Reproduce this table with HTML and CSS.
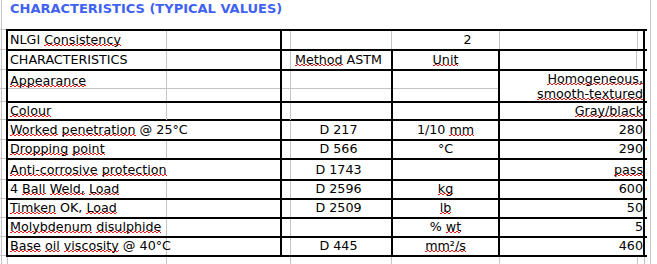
FILE: index.html
```html
<!DOCTYPE html>
<html>
<head>
<meta charset="utf-8">
<link rel="stylesheet" href="styles.css">
</head>
<body>
<div class="sheet">
  <h1 class="title">CHARACTERISTICS (TYPICAL VALUES)</h1>
  <div class="table">
    <div class="row r1">
      <div class="cell c1 g1">NLGI&nbsp;<span class="sp">Consistency</span></div>
      <div class="cell merged">2</div>
    </div>
    <div class="row r2">
      <div class="cell c1 g1">CHARACTERISTICS</div>
      <div class="cell c2 g2"><span class="sp">Method</span>&nbsp;ASTM</div>
      <div class="cell c3"><span class="sp">Unit</span></div>
      <div class="cell c4 g4"></div>
    </div>
    <div class="row r3">
      <div class="cell c1 g1 split"><span class="top"><span class="sp">Appearance</span></span></div>
      <div class="cell c2 g2 split"></div>
      <div class="cell c3 split"></div>
      <div class="cell c4 two"><span class="line"><span class="sp">Homogeneous,</span></span><span class="line"><span class="sp">smooth-textured</span></span></div>
    </div>
    <div class="row r4">
      <div class="cell c1 g1"><span class="sp">Colour</span></div>
      <div class="cell c2 g2"></div>
      <div class="cell c3"></div>
      <div class="cell c4"><span class="sp">Gray/black</span></div>
    </div>
    <div class="row r5">
      <div class="cell c1"><span class="sp">Worked</span>&nbsp;<span class="sp">penetration</span>&nbsp;@ 25°C</div>
      <div class="cell c2 g2">D 217</div>
      <div class="cell c3">1/10&nbsp;<span class="sp">mm</span></div>
      <div class="cell c4">280</div>
    </div>
    <div class="row r6">
      <div class="cell c1 g1"><span class="sp">Dropping</span>&nbsp;<span class="sp">point</span></div>
      <div class="cell c2 g2">D 566</div>
      <div class="cell c3">°C</div>
      <div class="cell c4">290</div>
    </div>
    <div class="row r7">
      <div class="cell c1"><span class="sp">Anti-corrosive</span>&nbsp;<span class="sp">protection</span></div>
      <div class="cell c2 g2">D 1743</div>
      <div class="cell c3"></div>
      <div class="cell c4"><span class="sp">pass</span></div>
    </div>
    <div class="row r8">
      <div class="cell c1 g1">4&nbsp;<span class="sp">Ball</span>&nbsp;<span class="sp">Weld,</span>&nbsp;<span class="sp">Load</span></div>
      <div class="cell c2 g2">D 2596</div>
      <div class="cell c3"><span class="sp">kg</span></div>
      <div class="cell c4">600</div>
    </div>
    <div class="row r9">
      <div class="cell c1 g1"><span class="sp">Timken</span>&nbsp;OK,&nbsp;<span class="sp">Load</span></div>
      <div class="cell c2 g2">D 2509</div>
      <div class="cell c3"><span class="sp">lb</span></div>
      <div class="cell c4">50</div>
    </div>
    <div class="row r10">
      <div class="cell c1 g1"><span class="sp">Molybdenum</span>&nbsp;<span class="sp">disulphide</span></div>
      <div class="cell c2 g2"></div>
      <div class="cell c3">%&nbsp;<span class="sp">wt</span></div>
      <div class="cell c4">5</div>
    </div>
    <div class="row r11">
      <div class="cell c1 g1"><span class="sp">Base</span>&nbsp;<span class="sp">oil</span>&nbsp;<span class="sp">viscosity</span>&nbsp;@ 40°C</div>
      <div class="cell c2 g2">D 445</div>
      <div class="cell c3"><span class="sp">mm²/s</span></div>
      <div class="cell c4">460</div>
    </div>
  </div>
  <div class="below"></div>
</div>
</body>
</html>
```

FILE: styles.css
```css
html, body {
  margin: 0;
  padding: 0;
  background: #fff;
}

.sheet {
  width: 657px;
  height: 264px;
  overflow: hidden;
  font-family: "DejaVu Sans", Verdana, sans-serif;
  font-size: 12.7px;
  color: #000;
  background:
    linear-gradient(#c4c4c4, #c4c4c4) 1px 0 / 1px 100% no-repeat,
    linear-gradient(#c4c4c4, #c4c4c4) 650px 0 / 1px 100% no-repeat,
    linear-gradient(#c4c4c4, #c4c4c4) 0 29px / 6px 1px no-repeat,
    linear-gradient(#c4c4c4, #c4c4c4) 0 49px / 6px 1px no-repeat,
    linear-gradient(#c4c4c4, #c4c4c4) 0 69px / 6px 1px no-repeat,
    linear-gradient(#c4c4c4, #c4c4c4) 0 88px / 6px 1px no-repeat,
    linear-gradient(#c4c4c4, #c4c4c4) 0 101px / 6px 1px no-repeat,
    linear-gradient(#c4c4c4, #c4c4c4) 0 119px / 6px 1px no-repeat,
    linear-gradient(#c4c4c4, #c4c4c4) 0 139px / 6px 1px no-repeat,
    linear-gradient(#c4c4c4, #c4c4c4) 0 158px / 6px 1px no-repeat,
    linear-gradient(#c4c4c4, #c4c4c4) 0 179px / 6px 1px no-repeat,
    linear-gradient(#c4c4c4, #c4c4c4) 0 198px / 6px 1px no-repeat,
    linear-gradient(#c4c4c4, #c4c4c4) 0 217px / 6px 1px no-repeat,
    linear-gradient(#c4c4c4, #c4c4c4) 0 236px / 6px 1px no-repeat,
    linear-gradient(#c4c4c4, #c4c4c4) 0 255px / 6px 1px no-repeat;
}

.title {
  margin: 0;
  height: 29px;
  padding-left: 10px;
  font-size: 13px;
  font-weight: bold;
  line-height: 18px;
  color: #3f62f2;
  letter-spacing: 0;
}

.table {
  margin-left: 6px;
  width: 639px;
  border-left: 2px solid #000;
  border-top: 2px solid #000;
}

.row {
  display: grid;
  grid-template-columns: 274px 111px 107px 145px;
  border-bottom: 2px solid #000;
  box-sizing: border-box;
}

.r1 { grid-template-columns: 274px 363px; height: 20px; }
.r2 { height: 20px; }
.r3 { height: 32px; }
.r4 { height: 18px; }
.r5 { height: 20px; }
.r6 { height: 19px; }
.r7 { height: 21px; }
.r8 { height: 19px; }
.r9 { height: 19px; }
.r10 { height: 19px; }
.r11 { height: 19px; }

.cell {
  display: flex;
  align-items: flex-end;
  box-sizing: border-box;
  border-right: 2px solid #000;
  padding: 0 2px 2px 2px;
  line-height: 15px;
  white-space: nowrap;
  min-width: 0;
}

.c2 { justify-content: center; padding-left: 6px; }
.c3 { justify-content: center; }
.c4 { justify-content: flex-end; padding-right: 0; }

.merged {
  justify-content: center;
  padding-left: 12px;
  border-right: 2px solid #000;
  background:
    linear-gradient(#c4c4c4, #c4c4c4) 8px 0 / 1px 100% no-repeat,
    linear-gradient(#c4c4c4, #c4c4c4) 109px 0 / 1px 100% no-repeat,
    linear-gradient(#c4c4c4, #c4c4c4) 217px 0 / 1px 100% no-repeat,
    linear-gradient(#c4c4c4, #c4c4c4) 355px 0 / 1px 100% no-repeat;
}

.g1 { background: linear-gradient(#c4c4c4, #c4c4c4) 158px 0 / 1px 100% no-repeat; }
.g2 { background: linear-gradient(#c4c4c4, #c4c4c4) 8px 0 / 1px 100% no-repeat; }
.g4 { background: linear-gradient(#c4c4c4, #c4c4c4) 136px 0 / 1px 100% no-repeat; }

.c1.split {
  background:
    linear-gradient(#c4c4c4, #c4c4c4) 158px 0 / 1px 100% no-repeat,
    linear-gradient(#c4c4c4, #c4c4c4) 0 17px / 100% 1px no-repeat;
  align-items: flex-start;
}
.c2.split {
  background:
    linear-gradient(#c4c4c4, #c4c4c4) 8px 0 / 1px 100% no-repeat,
    linear-gradient(#c4c4c4, #c4c4c4) 0 17px / 100% 1px no-repeat;
}
.c3.split {
  background: linear-gradient(#c4c4c4, #c4c4c4) 0 17px / 100% 1px no-repeat;
}

.top {
  display: block;
  padding-top: 2px;
}

.two {
  flex-direction: column;
  align-items: flex-end;
  justify-content: flex-start;
  padding-top: 0;
  padding-bottom: 0;
  line-height: 15px;
}

.line { display: block; }

/* spell-check squiggle: small 2px high square wave under the word */
.sp {
  background-image:
    linear-gradient(to right, #e81818 50%, transparent 50%),
    linear-gradient(to right, transparent 50%, #e81818 50%);
  background-size: 4px 1px, 4px 1px;
  background-repeat: repeat-x, repeat-x;
  background-position: 0 calc(100% - 1px), 0 calc(100% - 2px);
}

.below {
  height: 8px;
  background:
    linear-gradient(#c4c4c4, #c4c4c4) 7px 0 / 1px 100% no-repeat,
    linear-gradient(#c4c4c4, #c4c4c4) 166px 0 / 1px 100% no-repeat,
    linear-gradient(#c4c4c4, #c4c4c4) 290px 0 / 1px 100% no-repeat,
    linear-gradient(#c4c4c4, #c4c4c4) 391px 0 / 1px 100% no-repeat,
    linear-gradient(#c4c4c4, #c4c4c4) 499px 0 / 1px 100% no-repeat,
    linear-gradient(#c4c4c4, #c4c4c4) 637px 0 / 1px 100% no-repeat,
    linear-gradient(#c4c4c4, #c4c4c4) 644px 0 / 1px 100% no-repeat;
}
```
